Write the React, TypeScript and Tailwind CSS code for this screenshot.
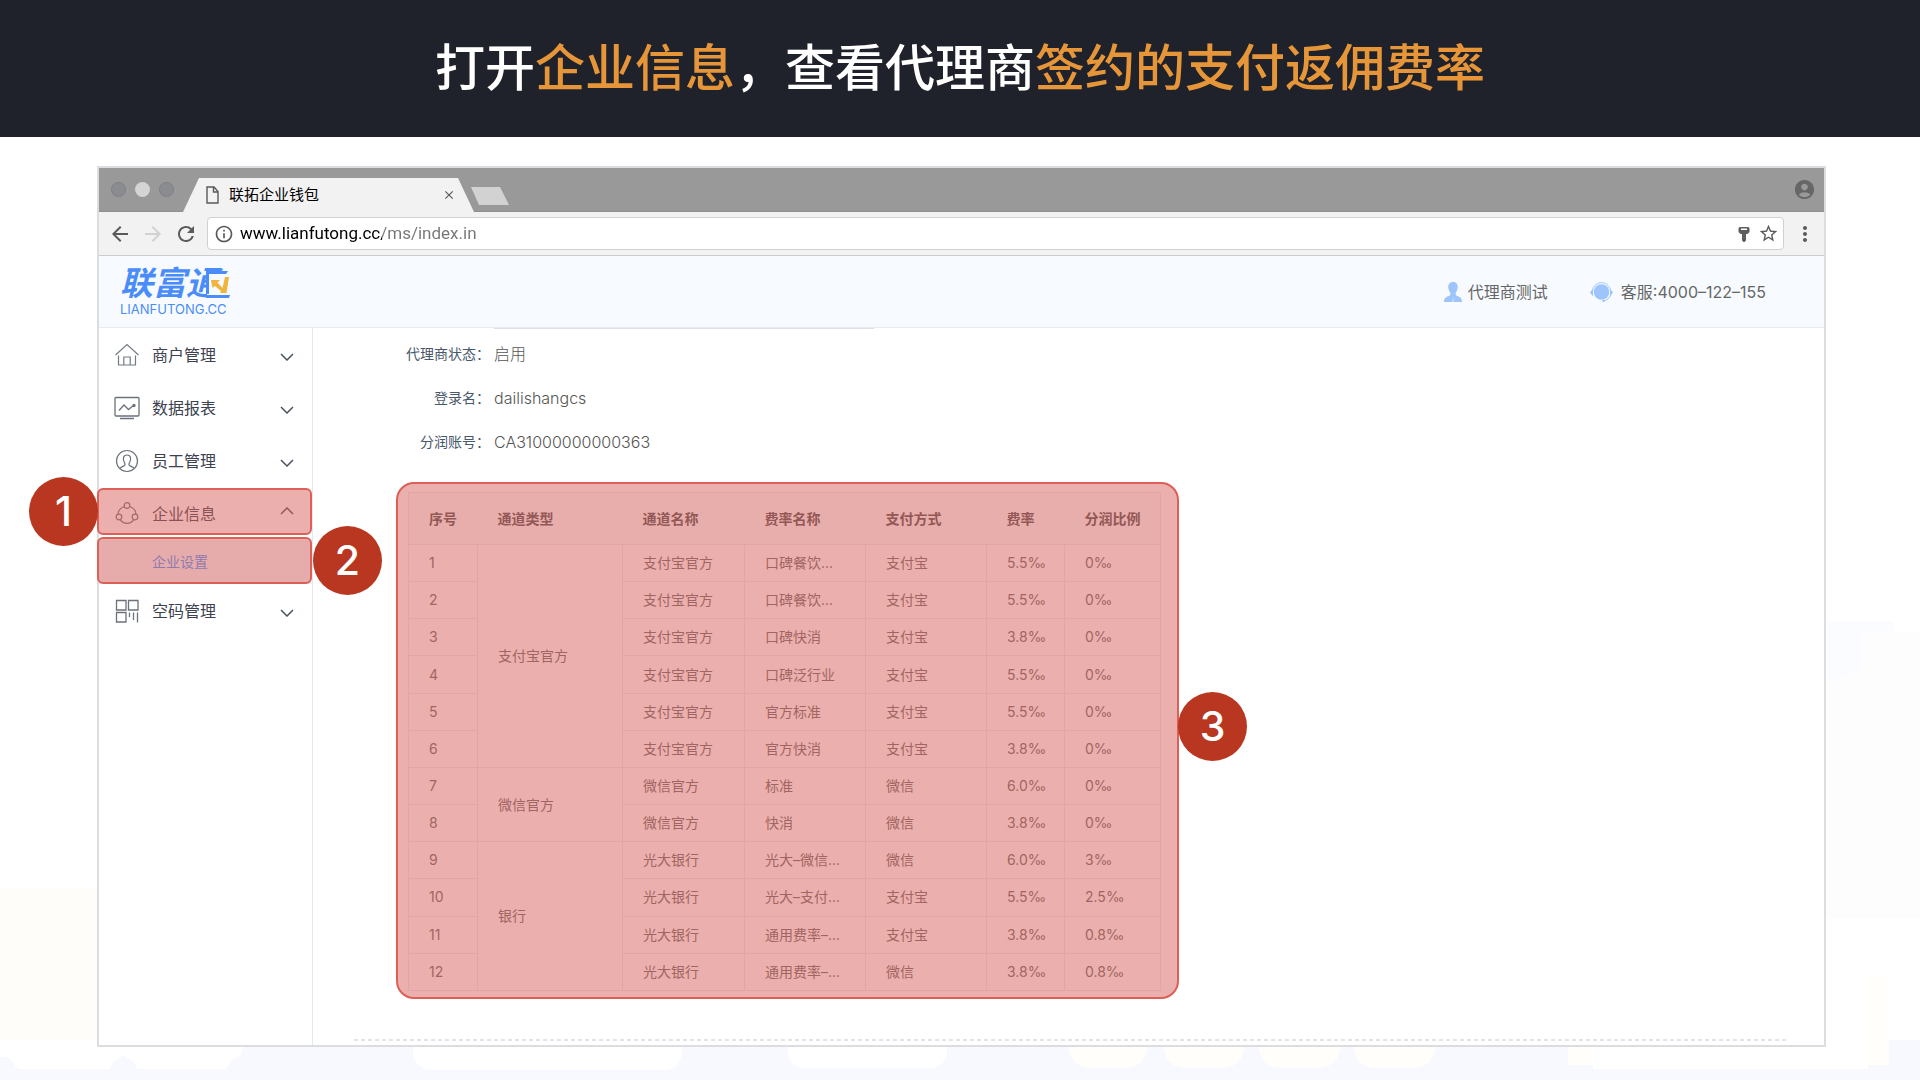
import { MdAccountCircle, MdArrowBack, MdArrowForward, MdClose, MdInfoOutline, MdMoreVert, MdRefresh, MdStarBorder } from "react-icons/md"

const rows = [
    ["1", "支付宝官方", "口碑餐饮...", "支付宝", "5.5‰", "0‰"],
    ["2", "支付宝官方", "口碑餐饮...", "支付宝", "5.5‰", "0‰"],
    ["3", "支付宝官方", "口碑快消", "支付宝", "3.8‰", "0‰"],
    ["4", "支付宝官方", "口碑泛行业", "支付宝", "5.5‰", "0‰"],
    ["5", "支付宝官方", "官方标准", "支付宝", "5.5‰", "0‰"],
    ["6", "支付宝官方", "官方快消", "支付宝", "3.8‰", "0‰"],
    ["7", "微信官方", "标准", "微信", "6.0‰", "0‰"],
    ["8", "微信官方", "快消", "微信", "3.8‰", "0‰"],
    ["9", "光大银行", "光大–微信...", "微信", "6.0‰", "3‰"],
    ["10", "光大银行", "光大–支付...", "支付宝", "5.5‰", "2.5‰"],
    ["11", "光大银行", "通用费率–...", "支付宝", "3.8‰", "0.8‰"],
    ["12", "光大银行", "通用费率–...", "微信", "3.8‰", "0.8‰"],
]

// channel type cells, keyed by the row they start on
const groups: Record<string, { name: string, span: number }> = {
    "1": { name: "支付宝官方", span: 6 },
    "7": { name: "微信官方", span: 2 },
    "9": { name: "银行", span: 4 },
}

const HomeIcon = () => (
    <svg className="size-[26px]" viewBox="0 0 26 26" fill="none" stroke="#747b85" strokeWidth="1.2">
        <path d="M1.500 13 13 2.500 24.500 13M4.500 13.500V23h17V13.500M9.800 23v-8h6.400v8" />
    </svg>
)

const ReportIcon = () => (
    <svg className="size-[26px]" viewBox="0 0 26 26" fill="none" stroke="#6b727c" strokeWidth="1.3">
        <rect x="1" y="2.500" width="24" height="18.500" rx="1" />
        <path d="M5 15.500 10 10l4.500 4.500 5.500-4.500M6 23.500h14" />
        <circle cx="20" cy="10.500" r="1" fill="#6b727c" />
    </svg>
)

const StaffIcon = () => (
    <svg className="size-[26px]" viewBox="0 0 26 26" fill="none" stroke="#6b727c" strokeWidth="1.2">
        <circle cx="13" cy="13" r="10.500" />
        <path d="M6 20.500c.5-1.500 3-2 4.500-3 1-.8.5-2-.2-3.200C9 12 8.500 7 13 7s4 5 2.700 7.300c-.7 1.200-1.200 2.400-.2 3.200 1.500 1 4 1.500 4.500 3" />
    </svg>
)

const CompanyIcon = () => (
    <svg className="size-[26px]" viewBox="0 0 26 26" fill="none" stroke="#6b727c" strokeWidth="1.2">
        <circle cx="13" cy="4.500" r="2.800" />
        <circle cx="5" cy="16" r="2.800" />
        <circle cx="21" cy="16" r="2.800" />
        <path d="M10.200 5.500C6.500 6.800 4.300 9.500 4 13.200M15.800 5.500c3.700 1.300 5.900 4 6.200 7.700M6.200 18.700c3.500 5 10.100 5 13.600 0" />
    </svg>
)

const CodeIcon = () => (
    <svg className="size-[26px]" viewBox="0 0 26 26" fill="none" stroke="#6b727c" strokeWidth="1.3">
        <path d="M2.500 2.500h9.500v9.500h-9.500zM14.500 2.500h9.500v9.500h-9.500zM2.500 14.500h9.500v9.500h-9.500zM15.500 14.500v4.500M19.500 14.500v7.500M23.500 14.500v10" />
    </svg>
)

const Chevron = ({ up }: { up?: boolean }) => (
    <svg className={up ? "mb-1.5 ml-auto h-2 w-3.5" : "mt-1 ml-auto h-2 w-3.5"} viewBox="0 0 14 8" fill="none" stroke="#4a5260" strokeWidth="1.500">
        <path d={up ? "M1 7l6-6 6 6" : "M1 1l6 6 6-6"} />
    </svg>
)

const MenuItem = ({ icon, text, open }: any) => (
    <button className="flex h-[53px] w-full items-center gap-3 pr-[18px] pl-[15px] text-base text-[#3c4250]">
        {icon}
        <span>{text}</span>
        <Chevron up={open} />
    </button>
)

const Field = ({ label, value }: { label: string, value: string }) => (
    <div className="flex h-11 items-center">
        <dt className="w-[168px] text-right text-sm text-[#48576a]">{label}：</dt>
        <dd className="ml-1 text-base font-light text-[#555]">{value}</dd>
    </div>
)

const Step = ({ n, className }: { n: number, className: string }) => (
    <div className={"absolute z-10 flex size-[69px] items-center justify-center rounded-full bg-[#b93720] text-[41px] font-medium text-white " + className}>
        {n}
    </div>
)

// faint shapes behind the browser window
const Backdrop = () => (
    <svg className="absolute inset-0 -z-10 h-full w-full" viewBox="0 0 1920 1080" preserveAspectRatio="none">
        <path d="M0 888h97v152H0z" fill="#fffdf9" />
        <path d="M0 1057h8l10 12h92l3-7 10-7 11 7 3 7h89l6-9 8-4 6-16h1674v40H0z" fill="#f8f9fe" />
        <path d="M413 1030h269v22a18 18 0 0 1-18 18H431a18 18 0 0 1-18-18zM788 1030h159v22a16 16 0 0 1-16 16H804a16 16 0 0 1-16-16z" fill="#fff" />
        <path d="M1068 1040h80q0 28-24 28h-32q-24 0-24-28zM1163 1040h82q0 28-24 28h-34q-24 0-24-28zM1258 1040h83q0 28-24 28h-35q-24 0-24-28zM1353 1040h83q0 28-24 28h-35q-24 0-24-28z" fill="#fffefa" />
        <path d="M1827 631h93v287h-93z" fill="#fdfdfd" />
        <path d="M1827 621h67v10h-34v40l-33 10z" fill="#fafcff" />
        <path d="M1593 1000h327v13h-31v52h-21v4h-275z" fill="#fff" />
        <path d="M1568 1040h25v25h-25zM1868 975h21v90h-21z" fill="#fffefa" />
    </svg>
)

const TabBar = () => (
    <div className="flex h-11 items-end border-b border-[#8f8f8f] bg-[#999] pl-3">
        <div className="flex gap-[9px] self-center">
            <span className="size-[15px] rounded-full border border-[#7f7f85] bg-[#8b8b92]"></span>
            <span className="size-[15px] rounded-full bg-[#d4d4d4]"></span>
            <span className="size-[15px] rounded-full border border-[#7f7f85] bg-[#8b8b92]"></span>
        </div>
        <div className="-mb-px ml-[9px] flex h-[34px] w-[291px] items-center bg-[#f2f2f2] pr-[18px] pl-[23px] [clip-path:polygon(16px_0,calc(100%-16px)_0,100%_100%,0_100%)]">
            <svg className="h-[18px] w-[13px]" viewBox="0 0 13 18" fill="none" stroke="#5a5a5a" strokeWidth="1.400">
                <path d="M1 1h7l4 4.500V17H1zM7.500 1v5H12" />
            </svg>
            <span className="ml-2.5 text-[15px] text-black">联拓企业钱包</span>
            <button className="ml-auto text-[#5a5a5a]" aria-label="关闭"><MdClose size={14} /></button>
        </div>
        <div className="mb-[6px] -ml-[3px] h-[18px] w-[38px] bg-[#d2d2d2] [clip-path:polygon(0_0,29px_0,100%_100%,8px_100%)]"></div>
        <MdAccountCircle size={23} className="mr-2 ml-auto self-center text-[#666]" />
    </div>
)

const AddressBar = () => (
    <div className="flex h-11 items-center gap-[9px] border-b border-[#ccc] bg-[#f2f2f2] pr-[7px] pl-[9px] text-[#5a5a5a]">
        <button aria-label="后退"><MdArrowBack size={24} /></button>
        <button aria-label="前进" className="text-[#d2d2d2]"><MdArrowForward size={24} /></button>
        <button aria-label="刷新"><MdRefresh size={24} /></button>
        <div className="flex h-[33px] flex-1 items-center rounded border border-[#d0d0d0] bg-white pr-1 pl-1.5">
            <MdInfoOutline size={20} />
            <input
                aria-label="地址"
                defaultValue="www.lianfutong.cc/ms/index.in"
                className="ml-1.5 flex-1 bg-[linear-gradient(90deg,#000_142px,#757575_142px)] bg-clip-text font-['Roboto',sans-serif] text-[17px] text-transparent outline-none"
            />
            <svg className="mr-2 h-4 w-3" viewBox="0 0 12 16" fill="#5f5f5f">
                <path fillRule="evenodd" d="M2 1h8a1.500 1.500 0 0 1 1.500 1.500V6L9.500 8H8v6.500L6.500 16h-1L4 14.500V8H2.500L.5 6V2.500A1.500 1.500 0 0 1 2 1zM3 2.500V4h6V2.500z" />
            </svg>
            <MdStarBorder size={21} />
        </div>
        <button aria-label="菜单"><MdMoreVert size={24} /></button>
    </div>
)

const Logo = () => (
    <div className="relative w-[112px] text-[#4a8df8]">
        <div className="text-[33px] leading-8 font-bold italic">联富通</div>
        <div className="mt-0.5 text-[13px] leading-4">LIANFUTONG.CC</div>
        <svg className="absolute top-1 right-0.5 h-[28px] w-[24px]" viewBox="0 0 24 28">
            <path d="M1 3h23v22H1z" fill="#f7fbff" />
            <path d="M0 0h22l-2 3H0zM0 3h3v20H0zM0 24h24l-1 3H0z" fill="#4a8df8" />
            <path d="M5 9h9l-2.500 2.500 5 5.500L19 6h4l-2.500 16H14l1-2-6-5-2.500 2z" fill="#f0b53c" />
        </svg>
    </div>
)

export default () => {

    return (
        <div className="relative isolate min-h-screen overflow-hidden bg-white pb-[33px] font-['Inter','Noto_Sans_CJK_SC',sans-serif]">
            <Backdrop />

            <h1 className="flex h-[137px] items-center justify-center bg-[#1f222b] text-[50px] font-medium text-white">
                <span>打开<span className="text-[#e69638]">企业信息</span>，查看代理商<span className="text-[#e69638]">签约的支付返佣费率</span></span>
            </h1>

            <div className="mt-[29px] mr-[94px] ml-[97px] border-2 border-[#dcdde0] bg-white">
                <TabBar />
                <AddressBar />

                <div className="flex h-[72px] items-center border-b border-[#e6ebf1] bg-[#f7fbff] pr-[58px] pl-[21px] text-base text-[#666]">
                    <Logo />
                    <svg className="ml-auto h-5 w-[18px]" viewBox="0 0 18 20" fill="#9dc4fb">
                        <path d="M9 0c3.500 0 5 2.500 4.700 5.500-.2 2.500-1.200 4-2 5.500-.5 1.500.3 2.500 1.500 3 2.500 1 4.800 1.500 4.800 6H9.500L9 15l-.5 5H0c0-4.500 2.300-5 4.800-6 1.200-.5 2-1.500 1.500-3-.8-1.500-1.800-3-2-5.500C4 2.500 5.500 0 9 0z" />
                    </svg>
                    <span className="ml-1.5">代理商测试</span>
                    <svg className="ml-[42px] h-5 w-[23px]" viewBox="0 0 23 20" fill="#9dc4fb">
                        <circle cx="11.500" cy="10" r="7.800" />
                        <path d="M0 10.500 3 6.500v8zM23 10.500 20 6.500v8z" />
                        <path d="M2.500 8.500C5-2 18-2 20.500 8.500M20.500 13c-1 3-3.500 5.500-7 6" fill="none" stroke="#9dc4fb" />
                        <circle cx="13.500" cy="19" r="1.200" />
                    </svg>
                    <span className="ml-2">客服:4000–122–155</span>
                </div>

                <div className="flex h-[717px]">
                    <nav className="w-[214px] shrink-0 border-r border-[#dfe9f2]">
                        <MenuItem icon={<HomeIcon />} text="商户管理" />
                        <MenuItem icon={<ReportIcon />} text="数据报表" />
                        <MenuItem icon={<StaffIcon />} text="员工管理" />
                        <div className="relative">
                            <MenuItem icon={<CompanyIcon />} text="企业信息" open />
                            <div className="pointer-events-none absolute top-px right-0 bottom-[5px] -left-0.5 rounded-md border-2 border-[#dd5f58] bg-[#d7615b]/50"></div>
                            <Step n={1} className="top-[-10px] -left-[70px]" />
                        </div>
                        <div className="relative">
                            <a href="#" className="flex h-11 items-center bg-[#f5f7fa] pl-[53px] text-sm text-[#4791ff]">企业设置</a>
                            <div className="pointer-events-none absolute -top-[3px] right-0 bottom-0 -left-0.5 rounded-md border-2 border-[#dd5f58] bg-[#d7615b]/50"></div>
                            <Step n={2} className="-top-[14px] -right-[70px]" />
                        </div>
                        <MenuItem icon={<CodeIcon />} text="空码管理" />
                    </nav>

                    <main className="flex-1 pr-[35px] pl-[35px]">
                        <div className="mb-[3px] ml-[146px] h-px w-[380px] bg-[#dcdfe6]"></div>
                        <dl className="-ml-[26px]">
                            <Field label="代理商状态" value="启用" />
                            <Field label="登录名" value="dailishangcs" />
                            <Field label="分润账号" value="CA31000000000363" />
                        </dl>

                        <div className="relative mt-[18px] ml-12 h-[517px] w-[783px] pt-2.5 pr-[18px] pl-3">
                            <table className="h-[499px] w-full table-fixed border-collapse border border-[#e8e9ed] text-left text-sm text-[#686868]">
                                <colgroup>
                                    <col className="w-[69px]" />
                                    <col className="w-[145px]" />
                                    <col className="w-[122px]" />
                                    <col className="w-[121px]" />
                                    <col className="w-[121px]" />
                                    <col className="w-[78px]" />
                                    <col />
                                </colgroup>
                                <thead>
                                    <tr className="h-[52px] bg-[#f8fafa] text-[#4c4c50]">
                                        {["序号", "通道类型", "通道名称", "费率名称", "支付方式", "费率", "分润比例"].map(h => (
                                            <th key={h} className="pl-5 font-bold whitespace-nowrap">{h}</th>
                                        ))}
                                    </tr>
                                </thead>
                                <tbody>
                                    {rows.map(([id, ...cells]) => (
                                        <tr key={id}>
                                            <td className="border border-[#e8e9ed] pl-5">{id}</td>
                                            {groups[id] && <td rowSpan={groups[id].span} className="border border-[#e8e9ed] pl-5">{groups[id].name}</td>}
                                            {cells.map((c, i) => (
                                                <td key={i} className="border border-[#e8e9ed] pl-5 whitespace-nowrap">{c}</td>
                                            ))}
                                        </tr>
                                    ))}
                                </tbody>
                            </table>
                            <div className="pointer-events-none absolute inset-0 rounded-[18px] border-2 border-[#dd5f58] bg-[#d7615b]/50"></div>
                            <Step n={3} className="top-[210px] -right-[68px]" />
                        </div>

                        <div className="mt-10 ml-1.5 h-0.5 bg-[repeating-linear-gradient(90deg,#e4e4e4_0_4px,transparent_4px_7px)]"></div>
                    </main>
                </div>
            </div>
        </div>
    )

}
